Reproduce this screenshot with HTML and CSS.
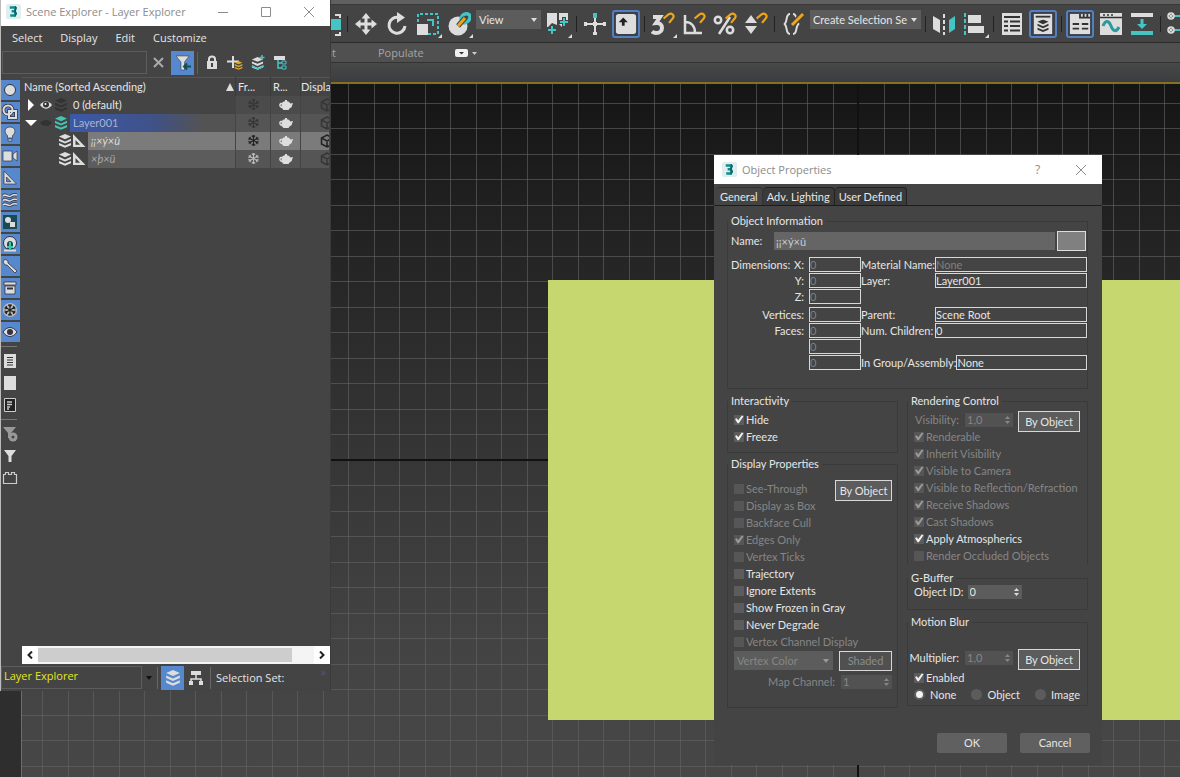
FILE: index.html
```html
<!DOCTYPE html>
<html lang="en">
<head>
    <meta charset="UTF-8">
    <meta name="viewport" content="width=device-width, initial-scale=1.0">
    <title>Object Properties</title>
    <link rel="stylesheet" href="styles.css">
</head>
<body>
    <!-- Shared icons -->
    <svg class="defs" width="0" height="0" aria-hidden="true">
        <symbol id="logo" viewBox="0 0 16 16">
            <rect x="0" y="0" width="16" height="16" rx="2" fill="#dfeeee"/>
            <path d="M4 2.500h6.500l1 1.500-1 3.500 1.200 3-1.700 3H4.500V11h4V9H6V6.500h2.500V5H4z" fill="#138a8c"/>
            <path d="M9 2.500h1.500l1 1.500-1 3.500 1.200 3-1.700 3H9l1-3-1.500-3L10 5z" fill="#0b5f66"/>
        </symbol>
        <symbol id="layers" viewBox="0 0 14 14">
            <path d="M7 0l6 2.600-6 2.600-6-2.600z"/>
            <path d="M1 4.800l6 2.600 6-2.600v2.200L7 9.600 1 7z"/>
            <path d="M1 9l6 2.600L13 9v2.200l-6 2.600-6-2.600z"/>
        </symbol>
        <symbol id="snow" viewBox="0 0 14 14">
            <g fill="none" stroke="currentColor" stroke-width="1.200">
                <path d="M7 1v12M1.800 4l10.400 6M12.200 4L1.800 10"/>
                <path d="M5.200 1.800L7 3.500l1.800-1.700M5.200 12.200L7 10.500l1.800 1.700M1.500 6l2.300-.7L3.300 3M12.500 8l-2.300.7.500 2.300M12.500 6l-2.300-.7.500-2.300M1.500 8l2.300.7L3.300 11"/>
            </g>
        </symbol>
        <symbol id="teapot" viewBox="0 0 14 12">
            <path d="M6 1h2v1.200c2 .3 3 1.300 3.300 2.300L14 4l-1.500 4.200-2 1.300L9.500 11h-5L3 9.200C1.200 9 0 7.500.2 5.500.5 4 2 3.600 3 4c.6-1 1.500-1.600 3-1.800z"/>
            <path d="M2.800 5.200c-1.400-.3-1.800 1.600-.2 2.300z" fill="#666"/>
        </symbol>
        <symbol id="cube" viewBox="0 0 14 14">
            <path d="M7 1l5.500 3v6L7 13l-5.500-3V4zM1.500 4L7 7l5.500-3M7 7v6" fill="none" stroke="currentColor" stroke-width="1.500"/>
        </symbol>
        <symbol id="square" viewBox="0 0 14 14">
            <path d="M1 0l12.500 13H1zM3.500 6v4.700H8z" fill-rule="evenodd"/>
        </symbol>
        <symbol id="magnet" viewBox="0 0 12 12">
            <path d="M1.500 6L6 2.200c3-2 6 1 4 3.600L6.500 10" fill="none" stroke="#eda61a" stroke-width="2"/>
        </symbol>
        <symbol id="spin" viewBox="0 0 7 10">
            <path d="M3.500 1L6 4H1zM1 6h5L3.500 9z"/>
        </symbol>
    </svg>

    <div class="app">
        <div class="menu-strip"></div>

        <div class="toolbar">
            <button class="tool" aria-label="Select region"><svg viewBox="0 0 24 24"><path d="M18 3h5v3M18 23h5v-3" fill="none" stroke="#ddd" stroke-width="2"/><path d="M8 7h17v11H8z" fill="#45c4c4"/></svg></button>
            <span class="sep"></span>
            <button class="tool" aria-label="Move"><svg viewBox="0 0 24 24"><path d="M12 1l4.500 5.500h-3v4h4v-3L23 12l-5.500 4.500v-3h-4v4h3L12 23l-4.500-5.500h3v-4h-4v3L1 12l5.500-4.500v3h4v-4h-3z"/></svg></button>
            <button class="tool" aria-label="Rotate"><svg viewBox="0 0 24 24"><path d="M14 5.500A8 8 0 1 0 20 14" fill="none" stroke="#ddd" stroke-width="3"/><path d="M12 0l8 5.500-8 5.500z"/></svg></button>
            <button class="tool flyout" aria-label="Scale"><svg viewBox="0 0 24 24"><path d="M2 10V2h20v20H12" fill="none" stroke="#45c4c4" stroke-width="2" stroke-dasharray="3 2"/><path d="M1 12h11v11H1z"/><path d="M11 8h6v6" fill="none" stroke="#45c4c4" stroke-width="2"/></svg></button>
            <button class="tool flyout" aria-label="Place"><svg viewBox="0 0 24 24"><circle cx="11" cy="14" r="9.500"/><path d="M14 8c0-8 10-8 9-2-1 4-5 5-7 5" fill="none" stroke="#45c4c4" stroke-width="3.500"/><path d="M11 14l7-8" stroke="#444" stroke-width="5"/><path d="M11 14l7-8" stroke="#eda61a" stroke-width="3"/></svg></button>
            <span class="select view-select"><select aria-label="Reference coordinate system"><option>View</option></select></span>
            <button class="tool flyout" aria-label="Pivot center"><svg viewBox="0 0 24 24"><path d="M1 1h10v12l-5-2-4 4H1zM13 1h9v8h-4l-2 6-3-3z"/><path d="M6 13v10M1 18h10M18 5v10M13 10h10" stroke="#444" stroke-width="4"/><path d="M6 14v8M2 18h8M18 6v8M14 10h8" stroke="#45c4c4" stroke-width="2"/></svg></button>
            <span class="sep"></span>
            <button class="tool" aria-label="Manipulate"><svg viewBox="0 0 24 24"><path d="M12 3v20M2 12h20" stroke="#ddd" stroke-width="2"/><path d="M10 1h4v5h-4z" fill="#45c4c4"/><path d="M10 10h4v4h-4zM1 10h3v4H1zM20 10h3v4h-3zM10 20h4v3h-4z"/></svg></button>
            <button class="tool on" aria-label="Keyboard override"><svg viewBox="0 0 24 24"><rect x="1" y="1" width="22" height="22" rx="3"/><path d="M9 5l5 5h-3.500v4h-3v-4H4z" fill="#222"/></svg></button>
            <span class="sep"></span>
            <button class="tool flyout" aria-label="Snaps toggle"><svg viewBox="0 0 24 24"><path d="M2 5h7l-4 6c8-1 8 10 0 10-2 0-3-.5-4-1.500" fill="none" stroke="#ddd" stroke-width="4"/><use href="#magnet" x="11" y="0" width="13" height="13"/></svg></button>
            <button class="tool" aria-label="Angle snap"><svg viewBox="0 0 24 24"><path d="M3 3v18h17M3 10c6 0 10 4 10 11" fill="none" stroke="#ddd" stroke-width="2.500"/><use href="#magnet" x="11" y="0" width="13" height="13"/></svg></button>
            <button class="tool" aria-label="Percent snap"><svg viewBox="0 0 24 24"><g fill="none" stroke="#ddd" stroke-width="2.500"><circle cx="5" cy="8" r="3.200"/><circle cx="17" cy="18" r="3.200"/><path d="M17 5L6 22"/></g><use href="#magnet" x="11" y="0" width="13" height="13"/></svg></button>
            <button class="tool" aria-label="Spinner snap"><svg viewBox="0 0 24 24"><path d="M7 3l6 8H1zM1 14h12l-6 8z"/><use href="#magnet" x="11" y="0" width="13" height="13"/></svg></button>
            <span class="sep"></span>
            <button class="tool" aria-label="Edit named selection sets"><svg viewBox="0 0 24 24"><path d="M9 2C4 2 7 11 3 12c4 1 1 10 6 10M12 2c5 0 2 9 6 10-4 1-1 10-6 10" fill="none" stroke="#ddd" stroke-width="2"/><path d="M11 13L22 2" stroke="#444" stroke-width="6"/><path d="M11 13L22 2" stroke="#eda61a" stroke-width="3"/></svg></button>
            <span class="select set-select"><select aria-label="Named selection sets"><option>Create Selection Se</option></select></span>
            <span class="sep"></span>
            <button class="tool" aria-label="Mirror"><svg viewBox="0 0 24 24"><path d="M1 4l7 4v13l-7-4z"/><path d="M23 4l-6 4v13l6-4z" fill="#45c4c4"/><path d="M12 2v21" stroke="#ddd" stroke-width="2" stroke-dasharray="4 2"/></svg></button>
            <button class="tool flyout" aria-label="Align"><svg viewBox="0 0 24 24"><path d="M2 1v22" stroke="#45c4c4" stroke-width="2" stroke-dasharray="4 2"/><path d="M5 3h13v8H5zM5 14h16v7H5z"/></svg></button>
            <span class="sep"></span>
            <button class="tool" aria-label="Scene explorer"><svg viewBox="0 0 24 24"><path d="M2 1h20v22H2z"/><path d="M4 5h16M4 9.500h4M10 9.500h10M4 14h4M10 14h10M4 18.500h4M10 18.500h10" stroke="#333" stroke-width="2"/></svg></button>
            <button class="tool on" aria-label="Layer explorer"><svg viewBox="0 0 24 24"><path d="M2 1h20v22H2z"/><path d="M4 4h16" stroke="#333" stroke-width="2"/><use href="#layers" x="5" y="7" width="14" height="14" fill="#333"/></svg></button>
            <span class="sep"></span>
            <button class="tool on" aria-label="Toggle ribbon"><svg viewBox="0 0 24 24"><path d="M1 1h22v22H1z"/><path d="M12 1v4h11M16 1v4M20 1v4M4 12h7M14 12h7M4 17h7M14 17h7" fill="none" stroke="#333" stroke-width="2"/></svg></button>
            <button class="tool" aria-label="Curve editor"><svg viewBox="0 0 24 24"><path d="M1 1h22v22H1z"/><path d="M1 5.500h22M4 3h2M8 3h2M12 3h2" stroke="#333" stroke-width="1.500"/><path d="M4 14c3-7 6-5 8 0s5 7 8 1" fill="none" stroke="#2c9a9a" stroke-width="3"/></svg></button>
            <button class="tool" aria-label="Schematic view"><svg viewBox="0 0 24 24"><path d="M1 1h22v4H1z"/><path d="M1 19h22v4H1zM10.500 7h3v5H17l-5 5-5-5h3.500z" fill="#45c4c4"/></svg></button>
            <span class="sep"></span>
            <button class="tool" aria-label="Material editor"><svg viewBox="0 0 24 24"><path d="M7 4h17M7 18h17" stroke="#45c4c4" stroke-width="2"/><g fill="none" stroke="#ddd" stroke-width="1.500"><circle cx="4" cy="4" r="3"/><circle cx="4" cy="18" r="3"/><path d="M2 2l4 4M6 2L2 6M2 16l4 4M6 16l-4 4"/></g></svg></button>
        </div>

        <div class="ribbon">
            <span class="ribbon-tab paint">Object Paint</span>
            <span class="ribbon-tab">Populate</span>
            <button class="ribbon-toggle" aria-label="Minimize ribbon"><svg width="22" height="8" viewBox="0 0 22 8"><rect width="13" height="8" rx="2" fill="#f0f0f0"/><path d="M4 3h5L6.500 5.500z" fill="#333"/><path d="M17 3h5l-2.500 3z" fill="#ccc"/></svg></button>
        </div>
        <div class="ribbon-body"></div>

        <div class="workspace">
            <div class="viewport">
                <div class="axis-x"></div>
                <div class="axis-y"></div>
                <div class="plane"></div>
            </div>
        </div>
    </div>

    <!-- Layer Explorer window -->
    <div class="explorer">
        <div class="titlebar">
            <svg class="logo" width="15" height="15"><use href="#logo"/></svg>
            <span class="title">Scene Explorer - Layer Explorer</span>
            <button aria-label="Minimize"><svg width="12" height="12" viewBox="0 0 12 12"><path d="M1 6.500h10"/></svg></button>
            <button aria-label="Maximize"><svg width="12" height="12" viewBox="0 0 12 12"><path d="M1.500 1.500h9v9h-9z"/></svg></button>
            <button aria-label="Close"><svg width="12" height="12" viewBox="0 0 12 12"><path d="M1 1l10 10M11 1L1 11"/></svg></button>
        </div>
        <div class="explorer-menu">
            <span>Select</span><span>Display</span><span>Edit</span><span>Customize</span>
        </div>
        <div class="explorer-tools">
            <input class="search" type="text" aria-label="Search">
            <button aria-label="Clear"><svg width="11" height="11" viewBox="0 0 11 11"><path d="M1 1l9 9M10 1l-9 9" stroke="#aaa" stroke-width="2"/></svg></button>
            <button class="on" aria-label="Filter"><svg width="16" height="16" viewBox="0 0 16 16"><path d="M1 1h13L9.500 7v8H6V7z" stroke="#333" stroke-width=".5"/><path d="M16 11.500H9M12 8.500l-3 3 3 3" fill="none" stroke="#134f50" stroke-width="2"/></svg></button>
            <span class="sep"></span>
            <button aria-label="Lock"><svg width="12" height="15" viewBox="0 0 12 15"><path d="M1 6h10v8H1zM5 8v4h2V8z" fill-rule="evenodd"/><path d="M3 6V4c0-3.500 6-3.500 6 0v2" fill="none" stroke="#ddd" stroke-width="2"/></svg></button>
            <button aria-label="New layer"><svg width="16" height="16" viewBox="0 0 16 16"><path d="M6 1v12M0 6.500h12" stroke="#ddd" stroke-width="2"/><use href="#layers" x="7" y="6" width="9" height="9" fill="#e3aa26"/></svg></button>
            <button aria-label="Add to layer"><svg width="16" height="16" viewBox="0 0 16 16"><use href="#layers" x="1" y="2" width="13" height="13" fill="#ddd"/><path d="M2 11l6 3 6-3M12 0v5M9.500 2.500h5" fill="none" stroke="#45c4c4" stroke-width="1.500"/></svg></button>
            <button aria-label="Select children"><svg width="16" height="16" viewBox="0 0 16 16"><path d="M1 1h11v4H1z"/><path d="M5 5v8h4M5 8h4" fill="none" stroke="#45c4c4" stroke-width="1.500"/><path d="M9 6h4v3H9zM9 11h4v3H9z" fill="none" stroke="#45c4c4"/></svg></button>
        </div>

        <div class="explorer-main">
            <div class="filters">
                <button class="on" aria-label="Geometry"><svg viewBox="0 0 16 16"><circle cx="8" cy="8" r="5.500" stroke="#334"/></svg></button>
                <button class="on" aria-label="Shapes"><svg viewBox="0 0 16 16"><g fill="none" stroke="#334" stroke-width="3.500"><circle cx="6" cy="6" r="4.500"/><path d="M7 7h7v7H7z"/></g><g fill="none" stroke="#ddd" stroke-width="2"><circle cx="6" cy="6" r="4.500"/><path d="M7 7h7v7H7z"/></g></svg></button>
                <button class="on" aria-label="Lights"><svg viewBox="0 0 16 16"><path d="M8 1c6 0 6 6 2.500 8.500V12h-5V9.500C2 7 2 1 8 1zM6 13h4v2H6z" stroke="#334" stroke-width=".7"/></svg></button>
                <button class="on" aria-label="Cameras"><svg viewBox="0 0 16 16"><path d="M1 3h9v10H1zM11 6l4-3v10l-4-3z" stroke="#334" stroke-width=".7"/></svg></button>
                <button class="on" aria-label="Helpers"><svg viewBox="0 0 16 16"><use href="#square" x="1" y="1" width="14" height="14" stroke="#334" stroke-width=".7"/></svg></button>
                <button class="on" aria-label="Space warps"><svg viewBox="0 0 16 16"><path d="M1 4c3-3 5 2 8 0s3-1 6-1M1 8.500c3-3 5 2 8 0s3-1 6-1M1 13c3-3 5 2 8 0s3-1 6-1" fill="none" stroke="#334" stroke-width="3"/><path d="M1 4c3-3 5 2 8 0s3-1 6-1M1 8.500c3-3 5 2 8 0s3-1 6-1M1 13c3-3 5 2 8 0s3-1 6-1" fill="none" stroke="#ddd" stroke-width="1.500"/></svg></button>
                <button class="on" aria-label="Groups"><svg viewBox="0 0 16 16"><path d="M1 1h14v14H1z" fill="#184c55"/><circle cx="6" cy="6" r="3"/><path d="M8 8h5v5H8z"/></svg></button>
                <button class="on" aria-label="XRefs"><svg viewBox="0 0 16 16"><circle cx="8" cy="7" r="6.500" stroke="#334"/><path d="M5 13V8c0-4 6-4 6 0v5z" fill="#184c55"/><path d="M8 6v7M5 11h6" stroke="#3cc7a5" stroke-width="2"/><path d="M2 14.500h12" stroke="#ddd" stroke-width="2"/></svg></button>
                <button class="on" aria-label="Bones"><svg viewBox="0 0 16 16"><path d="M3 1l3 2v2l9 8-2 2L5 7H3L1 4z" stroke="#334" stroke-width=".8"/></svg></button>
                <button class="on" aria-label="Containers"><svg viewBox="0 0 16 16"><path d="M2 2h12v3H2zM3 6h10v8H3z" stroke="#334" stroke-width=".8"/><path d="M5 8.500h6" stroke="#334" stroke-width="2"/></svg></button>
                <button class="on dark" aria-label="Frozen"><svg viewBox="0 0 16 16"><circle cx="8" cy="8" r="7" fill="#bbb"/><use href="#snow" x="1" y="1" width="14" height="14"/></svg></button>
                <button class="on" aria-label="Hidden"><svg viewBox="0 0 16 16"><path d="M1 8c4-6 10-6 14 0-4 6-10 6-14 0z" stroke="#334"/><circle cx="8" cy="8" r="3" fill="#334"/></svg></button>
                <hr>
                <button aria-label="All"><svg viewBox="0 0 16 16"><path d="M2 1h12v14H2z"/><path d="M5 4.500h6M5 7h6M5 9.500h6M5 12h6" stroke="#333"/></svg></button>
                <button aria-label="None"><svg viewBox="0 0 16 16"><path d="M2 1h12v14H2z"/></svg></button>
                <button aria-label="Invert"><svg viewBox="0 0 16 16"><path d="M2.500 1.500h11v13h-11z" fill="#222" stroke="#ccc"/><path d="M5 5h5M5 7.500h5M5 10h3M5 12h2" stroke="#ccc" stroke-width="1.500"/></svg></button>
                <hr>
                <button aria-label="Filter settings"><svg viewBox="0 0 16 16"><g fill="#999"><path d="M1 1h13L9 7v5H6V7z"/><circle cx="11" cy="11" r="4.500"/></g><circle cx="11" cy="11" r="1.500" fill="#444"/></svg></button>
                <button aria-label="Filter list"><svg viewBox="0 0 16 16"><path d="M2 2h12l-4.500 6v6h-3V8z"/></svg></button>
                <button aria-label="Container"><svg viewBox="0 0 16 16"><path d="M1.500 4.500h2v-2h3v2h3v-2h3v2h2v9h-13z" fill="none" stroke="#ccc" stroke-width="1.200"/></svg></button>
            </div>
            <div class="tree-panel">
                <table class="tree">
                    <thead>
                        <tr><th class="col-name">Name (Sorted Ascending)<svg class="sort" width="8" height="8" viewBox="0 0 8 8"><path d="M4 0l4 8H0z"/></svg></th><th class="col-frozen">Fr...</th><th class="col-render">R...</th><th class="col-display">Displa</th></tr>
                    </thead>
                    <tbody>
                        <tr>
                            <td><div class="node"><svg class="twist" width="16" height="12" viewBox="0 0 16 12"><path d="M6 0l6 6-6 6z" fill="#fff"/></svg><svg width="16" height="12" viewBox="0 0 16 12"><path d="M2 6c4-5 8-5 12 0-4 5-8 5-12 0z" fill="#ddd"/><circle cx="8" cy="5.500" r="3" fill="#333"/><circle cx="7.500" cy="5" r="1" fill="#fff"/></svg><svg class="black" width="14" height="14"><use href="#layers"/></svg><span class="label">0 (default)</span></div></td>
                            <td class="dim"><svg width="13" height="13"><use href="#snow"/></svg></td><td><svg width="14" height="12"><use href="#teapot"/></svg></td><td class="dim"><svg width="14" height="14"><use href="#cube"/></svg></td>
                        </tr>
                        <tr class="layer">
                            <td><div class="node"><svg class="twist" width="16" height="12" viewBox="0 0 16 12"><path d="M3 3h12l-6 6z" fill="#fff"/></svg><svg width="16" height="12" viewBox="0 0 16 12"><path d="M2 6c3-4 9-4 12 0-3 4-9 4-12 0z" fill="#333"/></svg><svg class="cyan" width="14" height="14"><use href="#layers"/></svg><span class="label">Layer001</span></div></td>
                            <td class="dim"><svg width="13" height="13"><use href="#snow"/></svg></td><td><svg width="14" height="12"><use href="#teapot"/></svg></td><td class="dim"><svg width="14" height="14"><use href="#cube"/></svg></td>
                        </tr>
                        <tr class="object current">
                            <td><div class="node"><svg width="14" height="14"><use href="#layers"/></svg><svg width="14" height="14"><use href="#square"/></svg><span class="label">¡¡×ý×û</span></div></td>
                            <td class="dark"><svg width="13" height="13"><use href="#snow"/></svg></td><td><svg width="14" height="12"><use href="#teapot"/></svg></td><td class="dark"><svg width="14" height="14"><use href="#cube"/></svg></td>
                        </tr>
                        <tr class="object">
                            <td><div class="node"><svg width="14" height="14"><use href="#layers"/></svg><svg width="14" height="14"><use href="#square"/></svg><span class="label">×þ×ü</span></div></td>
                            <td class="light"><svg width="13" height="13"><use href="#snow"/></svg></td><td><svg width="14" height="12"><use href="#teapot"/></svg></td><td class="dim"><svg width="14" height="14"><use href="#cube"/></svg></td>
                        </tr>
                    </tbody>
                </table>
                <div class="scrollbar">
                    <button aria-label="Scroll left"><svg width="6" height="8" viewBox="0 0 6 8"><path d="M5 0.500L1.500 4 5 7.500"/></svg></button>
                    <div class="track"><div class="thumb"></div></div>
                    <button aria-label="Scroll right"><svg width="6" height="8" viewBox="0 0 6 8"><path d="M1 0.500L4.500 4 1 7.500"/></svg></button>
                </div>
            </div>
        </div>

        <div class="explorer-footer">
            <span class="select layer-select"><select aria-label="Explorer"><option>Layer Explorer</option></select></span>
            <span class="sep"></span>
            <button class="on" aria-label="Sort by layer"><svg width="16" height="16"><use href="#layers"/></svg></button>
            <button aria-label="Sort by hierarchy"><svg width="14" height="14" viewBox="0 0 14 14"><path d="M2 0h10v4H2zM0 10h4v4H0zM10 10h4v4h-4z"/><path d="M7 4v4M2 10V8h10v2" fill="none" stroke="#ddd" stroke-width="1.500"/></svg></button>
            <span class="sep"></span>
            <span class="footer-label">Selection Set:</span>
            <span class="more">»</span>
        </div>
    </div>

    <!-- Object Properties dialog -->
    <div class="dialog">
        <div class="titlebar">
            <svg class="logo" width="15" height="15"><use href="#logo"/></svg>
            <span class="title">Object Properties</span>
            <button class="help" aria-label="Help">?</button>
            <button aria-label="Close"><svg width="12" height="12" viewBox="0 0 12 12"><path d="M1 1l10 10M11 1L1 11"/></svg></button>
        </div>
        <div class="tabs">
            <button class="tab active">General</button><button class="tab">Adv. Lighting</button><button class="tab">User Defined</button>
        </div>
        <form class="dialog-body">
            <fieldset class="object-info">
                <legend>Object Information</legend>
                <div class="name-row">
                    <label for="name">Name:</label>
                    <input type="text" id="name" value="¡¡×ý×û">
                    <button type="button" class="swatch" aria-label="Object color"></button>
                </div>
                <div class="info-row"><span>Dimensions:</span><label class="key" for="dimX">X:</label><input class="num" id="dimX" value="0" disabled><label for="material">Material Name:</label><input class="wide" id="material" value="None" disabled></div>
                <div class="info-row"><label class="key" for="dimY">Y:</label><input class="num" id="dimY" value="0" disabled><label for="layer">Layer:</label><input class="wide" id="layer" value="Layer001" readonly></div>
                <div class="info-row"><label class="key" for="dimZ">Z:</label><input class="num" id="dimZ" value="0" disabled></div>
                <div class="info-row second"><label class="key" for="vertices">Vertices:</label><input class="num" id="vertices" value="0" disabled><label for="parent">Parent:</label><input class="wide" id="parent" value="Scene Root" readonly></div>
                <div class="info-row"><label class="key" for="faces">Faces:</label><input class="num" id="faces" value="0" disabled><label for="children">Num. Children:</label><input class="wide" id="children" value="0" readonly></div>
                <div class="info-row"><span class="key"></span><input class="num" aria-label="Shape vertices" value="0" disabled></div>
                <div class="info-row"><span class="key"></span><input class="num" aria-label="Shape curves" value="0" disabled><label for="group">In Group/Assembly:</label><input class="group" id="group" value="None" readonly></div>
            </fieldset>

            <div class="columns">
                <div class="column">
                    <fieldset class="interactivity">
                        <legend>Interactivity</legend>
                        <label class="check"><input type="checkbox" checked>Hide</label>
                        <label class="check"><input type="checkbox" checked>Freeze</label>
                    </fieldset>
                    <fieldset class="display">
                        <legend>Display Properties</legend>
                        <button type="button" class="by-object">By Object</button>
                        <label class="check off"><input type="checkbox" disabled>See-Through</label>
                        <label class="check off"><input type="checkbox" disabled>Display as Box</label>
                        <label class="check off"><input type="checkbox" disabled>Backface Cull</label>
                        <label class="check off"><input type="checkbox" checked disabled>Edges Only</label>
                        <label class="check off"><input type="checkbox" disabled>Vertex Ticks</label>
                        <label class="check"><input type="checkbox">Trajectory</label>
                        <label class="check"><input type="checkbox">Ignore Extents</label>
                        <label class="check"><input type="checkbox">Show Frozen in Gray</label>
                        <label class="check"><input type="checkbox">Never Degrade</label>
                        <label class="check off"><input type="checkbox" disabled>Vertex Channel Display</label>
                        <div class="channel-row">
                            <span class="select channel-select off"><select aria-label="Channel" disabled><option>Vertex Color</option></select></span>
                            <button type="button" class="shaded" disabled>Shaded</button>
                        </div>
                        <div class="spin-row map-row off">
                            <label for="mapChannel">Map Channel:</label>
                            <span class="spinner"><input id="mapChannel" value="1" disabled><svg width="7" height="10"><use href="#spin"/></svg></span>
                        </div>
                    </fieldset>
                </div>

                <div class="column">
                    <fieldset class="rendering">
                        <legend>Rendering Control</legend>
                        <button type="button" class="by-object">By Object</button>
                        <div class="spin-row off">
                            <label for="visibility">Visibility:</label>
                            <span class="spinner"><input id="visibility" value="1,0" disabled><svg width="7" height="10"><use href="#spin"/></svg></span>
                        </div>
                        <label class="check off"><input type="checkbox" checked disabled>Renderable</label>
                        <label class="check off"><input type="checkbox" checked disabled>Inherit Visibility</label>
                        <label class="check off"><input type="checkbox" checked disabled>Visible to Camera</label>
                        <label class="check off"><input type="checkbox" checked disabled>Visible to Reflection/Refraction</label>
                        <label class="check off"><input type="checkbox" checked disabled>Receive Shadows</label>
                        <label class="check off"><input type="checkbox" checked disabled>Cast Shadows</label>
                        <label class="check"><input type="checkbox" checked>Apply Atmospherics</label>
                        <label class="check off"><input type="checkbox" disabled>Render Occluded Objects</label>
                    </fieldset>
                    <fieldset class="gbuffer">
                        <legend>G-Buffer</legend>
                        <div class="id-row">
                            <label for="objectId">Object ID:</label>
                            <span class="spinner"><input id="objectId" value="0"><svg width="7" height="10"><use href="#spin"/></svg></span>
                        </div>
                    </fieldset>
                    <fieldset class="motion">
                        <legend>Motion Blur</legend>
                        <button type="button" class="by-object">By Object</button>
                        <div class="spin-row">
                            <label for="multiplier">Multiplier:</label>
                            <span class="spinner off"><input id="multiplier" value="1,0" disabled><svg width="7" height="10"><use href="#spin"/></svg></span>
                        </div>
                        <label class="check enabled"><input type="checkbox" checked>Enabled</label>
                        <div class="radios">
                            <label><input type="radio" name="blur" checked>None</label>
                            <label><input type="radio" name="blur">Object</label>
                            <label><input type="radio" name="blur">Image</label>
                        </div>
                    </fieldset>
                </div>
            </div>

            <div class="actions">
                <button type="button">OK</button>
                <button type="button">Cancel</button>
            </div>
        </form>
    </div>
</body>
</html>
```
FILE: styles.css
```css
* {
    box-sizing: border-box;
}
body {
    margin: 0;
    height: 100vh;
    position: relative;
    overflow: hidden;
    background: #444;
    color: #e6e6e6;
    font-family: "Open Sans", "Noto Sans", sans-serif;
    font-size: 11px;
    line-height: 14px;
}
button, input, select {
    font: inherit;
    color: inherit;
    margin: 0;
    padding: 0;
    border: none;
    background: none;
}
svg {
    fill: #ddd;
    display: block;
    flex: none;
}
.defs {
    position: absolute;
}

/* Main window */
.app {
    display: flex;
    flex-direction: column;
    height: 100%;
}
.menu-strip {
    height: 5px;
    background: #606060;
    border-bottom: 1px solid #383838;
}
.toolbar {
    display: flex;
    gap: 3px;
    height: 38px;
    padding: 5px 0 0 315px;
    background: #444;
    border-bottom: 1px solid #2b2b2b;
    overflow: hidden;
}
.tool {
    position: relative;
    flex: none;
    width: 28px;
    height: 28px;
    padding: 2px;
}
.tool svg {
    width: 24px;
    height: 24px;
}
.tool.on {
    padding: 1px;
    border: 2px solid #5580c0;
    border-radius: 3px;
    background: #3a3f49;
}
.tool.on svg {
    width: 22px;
    height: 22px;
}
.tool.flyout::after {
    content: "";
    position: absolute;
    right: 0;
    bottom: 0;
    border: 2px solid #ddd;
    border-top-color: transparent;
    border-left-color: transparent;
}
.toolbar .sep {
    flex: none;
    width: 1px;
    height: 16px;
    margin: 6px 1px;
    background: #222;
}
.select {
    position: relative;
    display: block;
    flex: none;
}
.select select {
    appearance: none;
    display: block;
    width: 100%;
    height: 100%;
    padding: 0 3px;
    opacity: 1;
}
.select::after {
    content: "";
    position: absolute;
    right: 4px;
    top: 50%;
    margin-top: -2px;
    border: 3px solid transparent;
    border-top: 4px solid #ddd;
    border-bottom: none;
}
.toolbar .select {
    height: 19px;
    background: #5c5c5c;
    font-family: Lato, "Open Sans", sans-serif;
}
.view-select {
    width: 65px;
}
.set-select {
    width: 111px;
}
.ribbon {
    display: flex;
    align-items: center;
    height: 20px;
    background: #505050;
    border-bottom: 1px solid #333;
    color: #a5a5a5;
}
.ribbon-tab.paint {
    width: 336px;
    margin-right: 42px;
    text-align: right;
}
.ribbon-toggle {
    margin-left: 31px;
}
.ribbon-body {
    height: 19px;
    background: linear-gradient(#484848, #3b3d40);
}
.workspace {
    flex: 1;
    display: flex;
    padding-left: 21px;
    background: #2e2e2e;
}
.viewport {
    flex: 1;
    position: relative;
    border-top: 2px solid #84701f;
    border-left: 1px solid #84701f;
    background:
        repeating-linear-gradient(to right, transparent 0 20px, #64646499 20px 21px, transparent 21px 46px, #64646499 46px 47px, transparent 47px 51px),
        repeating-linear-gradient(to bottom, transparent 0 19px, #64646499 19px 20px, transparent 20px 44px, #64646499 44px 45px, transparent 45px 51px),
        linear-gradient(#151515, #313131 45%, #434343 80%, #474747);
    background-origin: padding-box;
    background-clip: padding-box;
}
.axis-x, .axis-y {
    position: absolute;
    background: #111;
}
.axis-x {
    left: 0;
    right: 0;
    top: 375px;
    height: 2px;
}
.axis-y {
    top: 0;
    bottom: 0;
    left: 835px;
    width: 2px;
}
.plane {
    position: absolute;
    left: 526px;
    right: 0;
    top: 196px;
    height: 440px;
    background: #c7d76f;
}

/* Windows */
.titlebar {
    display: flex;
    align-items: center;
    background: #fff;
    color: #8c8c8c;
}
.titlebar .title {
    flex: 1;
    margin-left: 5px;
}
.titlebar button {
    width: 43px;
    display: flex;
    justify-content: center;
}
.titlebar .help {
    font-size: 12px;
}
.titlebar button svg {
    fill: none;
    stroke: #8c8c8c;
}
.explorer {
    position: absolute;
    left: 0;
    top: 0;
    width: 331px;
    height: 691px;
    display: flex;
    flex-direction: column;
    background: #444;
    border-left: 1px solid #bbb;
    border-right: 1px solid #3a3a3a;
}
.explorer .titlebar {
    height: 26px;
    padding: 0 0 3px 5px;
}
.explorer-menu {
    display: flex;
    gap: 18px;
    height: 24px;
    padding: 5px 11px 0;
}
.explorer-tools {
    display: flex;
    align-items: center;
    height: 25px;
}
.explorer-tools button, .explorer-footer button {
    display: flex;
    align-items: center;
    justify-content: center;
    width: 23px;
    height: 24px;
}
.on {
    background: #5588cc;
}
.search {
    width: 145px;
    height: 23px;
    margin-left: 1px;
    border: 1px solid #5c5c5c;
}
.explorer-tools .on {
    margin-left: 1px;
}
.explorer-tools .sep {
    width: 1px;
    height: 22px;
    margin: 0 2px 0 3px;
    background: #6d6046;
}
.explorer-main {
    flex: 1;
    display: flex;
    gap: 2px;
    padding-top: 2px;
    font-family: Lato, "Open Sans", sans-serif;
}
.filters {
    display: flex;
    flex-direction: column;
    gap: 2px;
    width: 19px;
    padding-top: 3px;
}
.filters button {
    height: 20px;
    padding: 2px 1px;
}
.filters svg {
    width: 16px;
    height: 16px;
}
.filters hr {
    width: 16px;
    margin: 2px 0;
    border: none;
    border-top: 1px solid #777;
}
.tree-panel {
    flex: 1;
    min-width: 0;
    display: flex;
    flex-direction: column;
    justify-content: space-between;
    overflow: hidden;
}
.tree {
    table-layout: fixed;
    width: 100%;
    border-collapse: collapse;
}
.tree th, .tree td {
    height: 18px;
    padding: 0;
    font-weight: normal;
    text-align: left;
    white-space: nowrap;
    overflow: hidden;
}
.tree th {
    padding-left: 2px;
    border-top: 1px solid #555;
    border-right: 1px solid #3a3a3a;
}
.tree td {
    border-right: 1px solid #444;
    background: #4b4b4b;
}
.tree td:first-child {
    background: #444;
}
.sort {
    float: right;
    margin: 3px 1px 0;
}
.col-frozen {
    width: 35px;
}
.col-render {
    width: 30px;
}
.tree .col-display {
    width: 29px;
    padding-left: 0;
    border-right: none;
}
.tree td > svg {
    margin: 0 auto;
}
.tree td:last-child > svg {
    margin-left: 19px;
}
.node {
    display: flex;
    align-items: center;
    height: 18px;
}
.object .node {
    padding-left: 36px;
}
.node .label {
    flex: 1;
    height: 18px;
    margin-left: 2px;
    padding: 2px 3px;
}
.layer .node .label {
    background: linear-gradient(to right, #3c58a8, #3f5288 50%, #535353 80%);
    color: #a8b4cc;
}
.layer td, .tree .object td {
    background-color: #555;
}
.tree .object td:first-child, .layer td:first-child {
    background: #444;
}
.object .label {
    background: #5c5c5c;
    color: #aaa;
    font-style: italic;
}
.tree .current td:not(:first-child), .current .label {
    background: #7b7b7b;
}
.current .label {
    color: #ddd;
}
.black {
    fill: #333;
}
.cyan {
    fill: #45c4b4;
}
.dim {
    color: #363636;
}
.dark {
    color: #222;
}
.light {
    color: #bbb;
}
.scrollbar {
    display: flex;
    height: 18px;
    background: #fff;
}
.scrollbar button {
    width: 16px;
    display: flex;
    align-items: center;
    justify-content: center;
}
.scrollbar svg {
    fill: none;
    stroke: #222;
    stroke-width: 2;
}
.track {
    flex: 1;
    padding: 2px 0;
    background: #f4f4f4;
}
.thumb {
    width: 92%;
    height: 14px;
    background: #cdcdcd;
}
.explorer-footer {
    display: flex;
    align-items: center;
    height: 27px;
}
.layer-select {
    width: 153px;
    height: 23px;
    color: #e6e61e;
}
.layer-select select {
    width: 141px;
    padding: 0 2px 3px;
    border: 1px solid #5c5c5c;
}
.layer-select::after {
    right: 2px;
    border-top-color: #111;
}
.explorer-footer .sep {
    width: 1px;
    height: 22px;
    margin: 0 3px;
    background: #666;
}
.footer-label {
    margin-left: 2px;
}
.more {
    margin: -12px 4px 0 auto;
    color: #55557a;
}

/* Object Properties */
.dialog {
    position: absolute;
    left: 714px;
    top: 155px;
    width: 388px;
    background: #444;
}
.dialog .titlebar {
    height: 29px;
    padding-left: 8px;
}
.tabs {
    display: flex;
    height: 22px;
    padding: 3px 0 0 2px;
    border-bottom: 1px solid #1c1c1c;
    font-family: Lato, "Open Sans", sans-serif;
}
.tab {
    padding: 0 4px;
    height: 18px;
    border: 1px solid #222;
    border-left: none;
    border-bottom: none;
    border-radius: 4px 4px 0 0;
    background: #3a3a3a;
}
.tab.active {
    border-color: #333;
    background: #444;
}
.dialog-body {
    padding: 8px 14px 12px 13px;
    font-family: Lato, "Open Sans", sans-serif;
}
fieldset {
    min-width: 0;
    margin: 0;
    padding: 0 7px 0 6px;
    border: 1px solid #3a3a3a;
}
legend {
    margin-left: -6px;
    padding: 0 3px;
}
.object-info {
    padding: 3px 0 17px 3px;
}
.object-info legend {
    margin-left: -3px;
}
.name-row {
    display: flex;
    align-items: center;
    gap: 2px;
    margin-bottom: 6px;
}
.name-row label {
    width: 41px;
}
.name-row input {
    flex: 1;
    min-width: 0;
    height: 18px;
    padding: 0 2px;
    background: #656565;
    color: #ccc;
}
.swatch {
    width: 29px;
    height: 20px;
    margin-right: 1px;
    border: 1px solid #ddd;
    background: #808080;
}
.info-row {
    display: flex;
    align-items: center;
    height: 15px;
    margin-bottom: 1px;
    white-space: nowrap;
}
.info-row.second {
    margin-top: 3px;
}
.info-row span:first-child:not(.key) {
    width: 56px;
}
.info-row .key {
    flex: 0 0 78px;
    padding-right: 5px;
    text-align: right;
}
.info-row span:first-child + .key {
    flex-basis: 22px;
}
.info-row input {
    height: 15px;
    border: 1px solid #d8d8d8;
}
.num {
    width: 52px;
}
.info-row .wide {
    width: 152px;
    margin-left: auto;
}
.info-row .group {
    flex: 1;
    min-width: 0;
}
input:disabled {
    color: #808080;
}
.columns {
    display: grid;
    grid-template-columns: 171fr 181fr;
    gap: 9px;
    margin-top: 5px;
}
.column {
    min-width: 0;
}
.interactivity {
    margin-bottom: 4px;
    padding-top: 3px;
    padding-bottom: 7px;
}
.display {
    padding: 9px 5px 17px 6px;
}
.check {
    display: flex;
    align-items: center;
    gap: 2px;
    height: 17px;
    white-space: nowrap;
}
.off, .off input {
    color: #868686;
}
.off svg {
    fill: #868686;
}
input[type="checkbox"] {
    appearance: none;
    flex: none;
    width: 10px;
    height: 10px;
    background: #5c5c5c;
}
input[type="checkbox"]:checked::before {
    content: "";
    display: block;
    width: 10px;
    height: 10px;
    background: #f0f0f0;
    clip-path: polygon(10% 45%, 28% 38%, 42% 58%, 78% 10%, 95% 18%, 48% 88%, 35% 88%);
}
.off input[type="checkbox"] {
    background: #565656;
}
.off input[type="checkbox"]:checked::before {
    background: #999;
}
.by-object {
    float: right;
    height: 21px;
    margin-left: 5px;
    border: 1px solid #d8d8d8;
    background: #5c5c5c;
}
.display .by-object {
    width: 57px;
}
.rendering .by-object, .motion .by-object {
    width: 62px;
}
.channel-row {
    display: flex;
    gap: 6px;
    margin-top: 1px;
}
.channel-select {
    flex: 1;
    height: 19px;
    background: #5c5c5c;
}
.channel-select::after {
    border-top-color: #999;
}
.shaded {
    width: 53px;
    height: 20px;
    border: 1px solid #d8d8d8;
    background: #505050;
    color: #8c8c8c;
}
.spin-row {
    display: flex;
    align-items: center;
    justify-content: flex-end;
    gap: 6px;
    height: 17px;
}
.map-row {
    margin-top: 2px;
}
.spinner {
    display: flex;
    align-items: center;
    width: 48px;
    height: 14px;
    padding: 0 2px;
    background: #5c5c5c;
}
.spinner input {
    flex: 1;
    min-width: 0;
    height: 14px;
}
.off .spinner, .spinner.off {
    background: #525252;
}
.map-row .spinner {
    width: 51px;
}
.rendering {
    padding-top: 3px;
    padding-bottom: 0;
    margin-bottom: 7px;
    border-bottom: none;
}
.gbuffer {
    margin-bottom: 5px;
    padding-bottom: 10px;
}
.id-row {
    display: flex;
    align-items: center;
    gap: 4px;
}
.id-row .spinner {
    width: 54px;
}
.motion {
    padding-top: 20px;
    padding-bottom: 2px;
}
.enabled {
    margin-top: 3px;
}
.radios {
    display: flex;
    justify-content: space-between;
    height: 17px;
}
.radios label {
    display: flex;
    align-items: center;
    gap: 5px;
}
input[type="radio"] {
    appearance: none;
    width: 11px;
    height: 11px;
    border: 2px solid #5c5c5c;
    border-radius: 50%;
    background: #5c5c5c;
}
input[type="radio"]:checked {
    background: #f4f4f4;
}
.actions {
    display: flex;
    justify-content: flex-end;
    gap: 13px;
    margin: 25px -2px 0 0;
}
.actions button {
    width: 70px;
    height: 20px;
    border-radius: 2px;
    background: #606060;
}
```
